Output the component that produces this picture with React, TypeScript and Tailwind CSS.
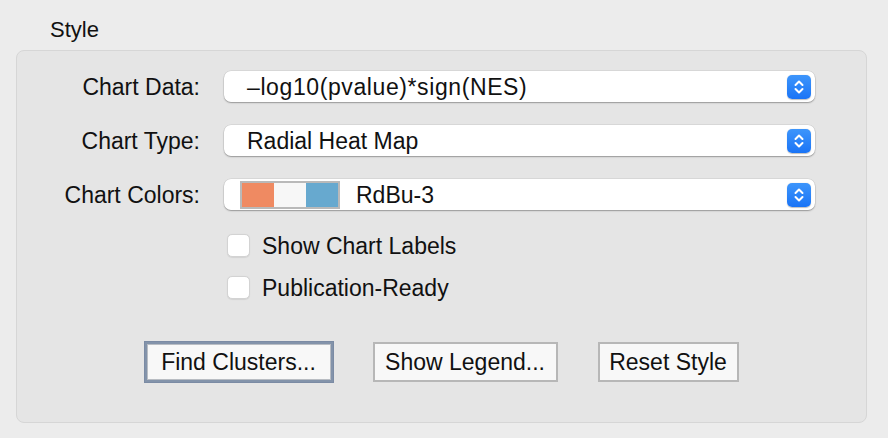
const FONT = { fontFamily: '"Liberation Sans", Arial, sans-serif' };

function Stepper() {
  return (
    <div className="flex h-[24px] w-[24px] items-center justify-center rounded-[5px] bg-gradient-to-b from-[#3d95fb] to-[#1a74f6] shadow-[0_0.5px_1px_rgba(0,0,0,0.25)]">
      <svg width="12" height="16" viewBox="0 0 12 16" fill="none">
        <path d="M2.5 6 L6 2.5 L9.5 6" stroke="white" strokeWidth="2" strokeLinecap="round" strokeLinejoin="round" />
        <path d="M2.5 10 L6 13.5 L9.5 10" stroke="white" strokeWidth="2" strokeLinecap="round" strokeLinejoin="round" />
      </svg>
    </div>
  );
}

function Select({ label, children, pad = "pl-[23px]" }: { label: string; children: React.ReactNode; pad?: string }) {
  return (
    <div className="flex h-[31px] items-center">
      <div className="w-[183px] pt-[2px] text-right">{label}</div>
      <div
        className={`ml-[24px] flex h-[31px] w-[591px] items-center justify-between rounded-[7px] bg-white pr-[4px] shadow-[0_0_0_0.5px_rgba(0,0,0,0.1),0_1px_1.5px_rgba(0,0,0,0.3)] ${pad}`}
      >
        <div className="flex items-center pt-[2px]">{children}</div>
        <Stepper />
      </div>
    </div>
  );
}

function Check({ label }: { label: string }) {
  return (
    <div className="flex h-[23px] items-center pl-[210px]">
      <div className="h-[23px] w-[23px] rounded-[5px] border border-[#d3d3d3] bg-white shadow-[0_0.5px_1px_rgba(0,0,0,0.08)]" />
      <span className="ml-[12px] pt-[1px]">{label}</span>
    </div>
  );
}

export default function App() {
  return (
    <div className="h-[438px] w-[888px] bg-[#ececec] text-[23px] text-[#111]" style={FONT}>
      <div className="h-[50px] pl-[50px] pt-[17px] text-[22px] leading-[26px]">Style</div>
      <div className="ml-[16px] flex h-[373px] w-[851px] flex-col rounded-[8px] border border-[#d6d6d6] bg-[#e5e5e5] pt-[20px]">
        <div className="flex flex-col gap-[23px]">
          <Select label="Chart Data:">
            <span className="tracking-[0.6px]">–log10(pvalue)*sign(NES)</span>
          </Select>
          <Select label="Chart Type:">Radial Heat Map</Select>
          <Select label="Chart Colors:" pad="pl-[16px]">
            <div className="-mt-[2px] flex h-[28px] border-2 border-[#b9b9b9]">
              <div className="w-[32px] bg-[#ef8a62]" />
              <div className="w-[32px] bg-[#f7f7f7]" />
              <div className="w-[32px] bg-[#67a9cf]" />
            </div>
            <span className="ml-[16px]">RdBu-3</span>
          </Select>
        </div>
        <div className="mt-[24px] flex flex-col gap-[19px]">
          <Check label="Show Chart Labels" />
          <Check label="Publication-Ready" />
        </div>
        <div className="mt-[43px] flex justify-center gap-[40px]">
          <button className="h-[40px] w-[188px] border-2 border-[#8393aa] bg-[#f8f8f8] shadow-[0_0_0_1px_#7b8ba4,inset_0_0_0_1px_#b9bdc3]">
            Find Clusters...
          </button>
          <button className="h-[40px] w-[185px] border-2 border-[#b7b7b7] bg-[#f8f8f8]">Show Legend...</button>
          <button className="h-[40px] w-[141px] border-2 border-[#b7b7b7] bg-[#f8f8f8]">Reset Style</button>
        </div>
      </div>
    </div>
  );
}
